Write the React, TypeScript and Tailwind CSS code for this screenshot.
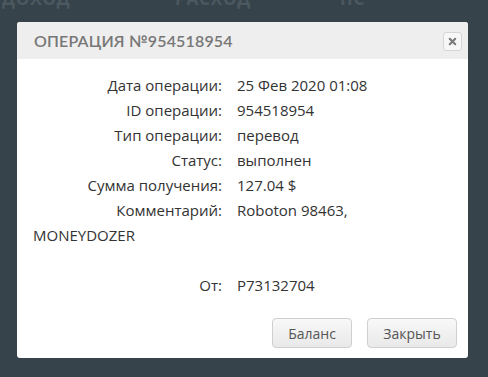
import { X } from 'lucide-react';

const rows: { label: string; value: React.ReactNode }[] = [
  { label: 'Дата операции:', value: '25 Фев 2020 01:08' },
  { label: 'ID операции:', value: '954518954' },
  { label: 'Тип операции:', value: 'перевод' },
  { label: 'Статус:', value: 'выполнен' },
  { label: 'Сумма получения:', value: '127.04 $' },
  {
    label: 'Комментарий:',
    value: (
      <>
        <span>Roboton 98463,</span> <span>MONEYDOZER</span>
        <br />
        <br />
      </>
    ),
  },
  { label: 'От:', value: 'P73132704' },
];

export default function App() {
  return (
    <div className="w-[488px] h-[377px] bg-[#36434a] overflow-hidden flex flex-col">
      {/* page behind the modal, mostly cut off */}
      <div className="h-[22px] overflow-hidden relative">
        <div className="flex -mt-[14px] text-[#4b585f] text-[17px] font-bold tracking-wider font-['Open_Sans',sans-serif]">
          <span className="w-[175px] pl-[2px]">ДОХОД</span>
          <span className="w-[165px]">РАСХОД</span>
          <span>ПС</span>
        </div>
      </div>

      {/* Modal */}
      <div className="ml-[17px] w-[451px] h-[336px] bg-white rounded-[3px] flex flex-col overflow-hidden">
        <div className="h-[37px] bg-[#eeeeee] flex items-center justify-between pl-[17px] pr-[6px]">
          <span className="text-[16px] font-semibold tracking-[0.01em] text-[#777777] font-['Lato',sans-serif] pt-[1px]">
            ОПЕРАЦИЯ №954518954
          </span>
          <button className="w-[19px] h-[19px] mt-[2px] rounded-[3px] border border-[#d6d6d6] bg-[#f7f7f7] flex items-center justify-center">
            <X className="w-[11px] h-[11px] text-[#7a7a7a]" strokeWidth={4.5} />
          </button>
        </div>

        <div className="flex-1 pl-[16px] pr-[50px] pt-[14px] text-[15px] leading-[25px] text-[#333333] font-['Open_Sans',sans-serif]">
          {rows.map((r) => (
            <div key={r.label}>
              <span className="inline-block w-[189px] text-right mr-[15px]">{r.label}</span>
              {r.value}
            </div>
          ))}
        </div>

        <div className="flex justify-end gap-[15px] pr-[11px] pb-[10px]">
          <button className="w-[80px] h-[30px] rounded-[4px] border border-[#cfcfcf] bg-gradient-to-b from-[#f8f8f8] to-[#e9e9e9] text-[14px] text-[#555555] font-['Open_Sans',sans-serif]">
            Баланс
          </button>
          <button className="w-[90px] h-[30px] rounded-[4px] border border-[#cfcfcf] bg-gradient-to-b from-[#f8f8f8] to-[#e9e9e9] text-[14px] text-[#555555] font-['Open_Sans',sans-serif]">
            Закрыть
          </button>
        </div>
      </div>
    </div>
  );
}
